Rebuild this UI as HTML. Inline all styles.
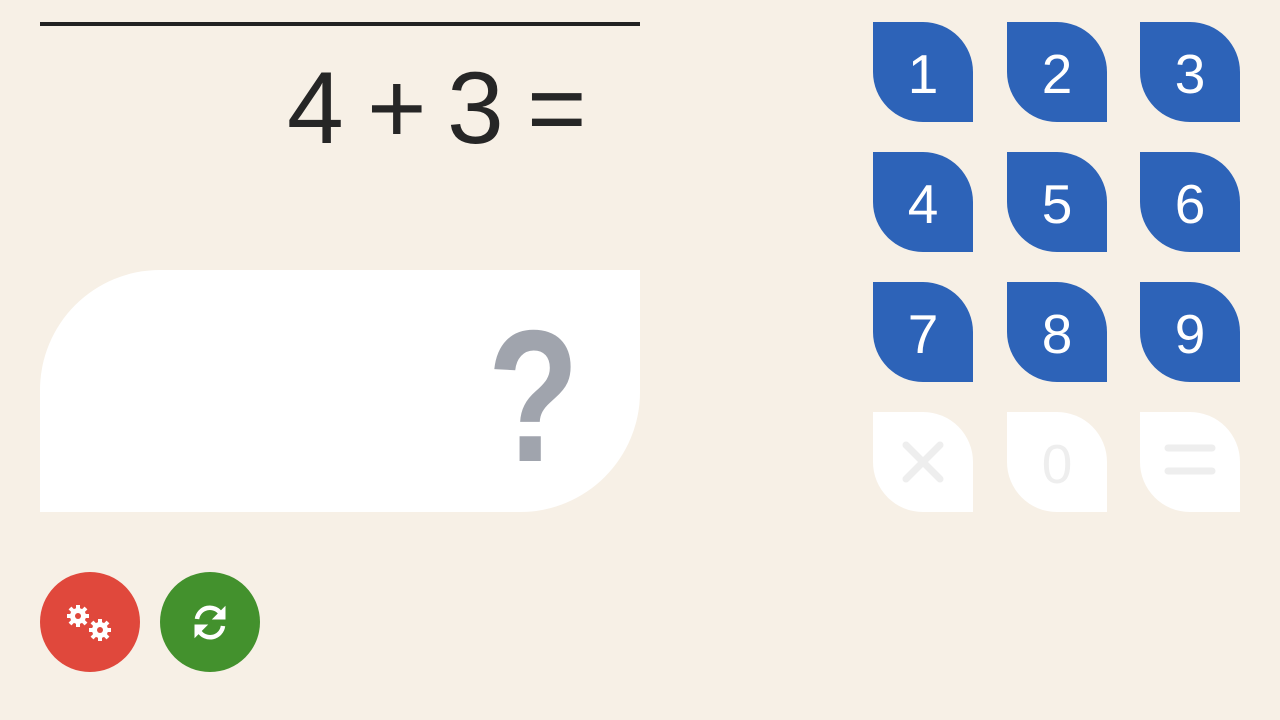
<!DOCTYPE html>
<html><head><style>
body{margin:0;width:1280px;height:720px;background:#f7f0e6;position:relative;overflow:hidden;font-family:"Liberation Sans",sans-serif}
.line{position:absolute;left:40px;top:22px;width:600px;height:4px;background:#222}
.g{position:absolute;font-size:102px;color:#262626;line-height:104px;top:56px;width:50px;text-align:center}
.ans{position:absolute;left:40px;top:270px;width:600px;height:242px;background:#fff;border-radius:120px 0 120px 0}
.q{position:absolute;left:478px;top:302px;width:94px;text-align:center;font-size:188px;font-weight:bold;color:#a0a4ad;line-height:188px;transform:scaleX(0.8);transform-origin:47px 0}
.k{position:absolute;width:100px;height:100px;background:#2d63b8;border-radius:0 50px 0 50px;color:#fff;font-size:55px;text-align:center;line-height:104px}
.w{background:#fff;color:#eee}
.c{position:absolute;width:100px;height:100px;border-radius:50%;top:572px}
</style></head><body>
<div class="line"></div>
<div class="g" style="left:287px">4</div>
<div class="g" style="left:367px">+</div>
<div class="g" style="left:447px">3</div>
<div class="g" style="left:527px">=</div>
<div class="ans"></div>
<div class="q">?</div>
<div class="k" style="left:873px;top:22px">1</div>
<div class="k" style="left:1007px;top:22px">2</div>
<div class="k" style="left:1140px;top:22px">3</div>
<div class="k" style="left:873px;top:152px">4</div>
<div class="k" style="left:1007px;top:152px">5</div>
<div class="k" style="left:1140px;top:152px">6</div>
<div class="k" style="left:873px;top:282px">7</div>
<div class="k" style="left:1007px;top:282px">8</div>
<div class="k" style="left:1140px;top:282px">9</div>
<div class="k w" style="left:873px;top:412px"><svg width="100" height="100" style="display:block"><path d="M33 33L67 67M67 33L33 67" stroke="#eee" stroke-width="7" stroke-linecap="round"/></svg></div>
<div class="k w" style="left:1007px;top:412px">0</div>
<div class="k w" style="left:1140px;top:412px"><svg width="100" height="100" style="display:block"><path d="M28 36H72M28 59H72" stroke="#eee" stroke-width="7" stroke-linecap="round"/></svg></div>
<div class="c" style="left:40px;background:#e0483c">
<svg width="100" height="100" viewBox="0 0 100 100">
<g fill="#fff"><circle cx="38" cy="44" r="8"/><g stroke="#fff" stroke-width="4"><path d="M38 33V55M27 44H49M30 36L46 52M46 36L30 52"/></g><circle cx="38" cy="44" r="3" fill="#e0483c"/>
<circle cx="60" cy="58" r="8"/><g stroke="#fff" stroke-width="4"><path d="M60 47V69M49 58H71M52 50L68 66M68 50L52 66"/></g><circle cx="60" cy="58" r="3" fill="#e0483c"/></g>
</svg></div>
<div class="c" style="left:160px;background:#43912d">
<svg width="100" height="100" viewBox="0 0 100 100" fill="none" stroke="#fff" stroke-width="4.5">
<path d="M37 47A13 13 0 0 1 61 42"/><path d="M63 54A13 13 0 0 1 39 59"/>
<path d="M65 35V47H53Z" fill="#fff" stroke-width="1"/><path d="M35 65V53H47Z" fill="#fff" stroke-width="1"/>
</svg></div>
</body></html>
